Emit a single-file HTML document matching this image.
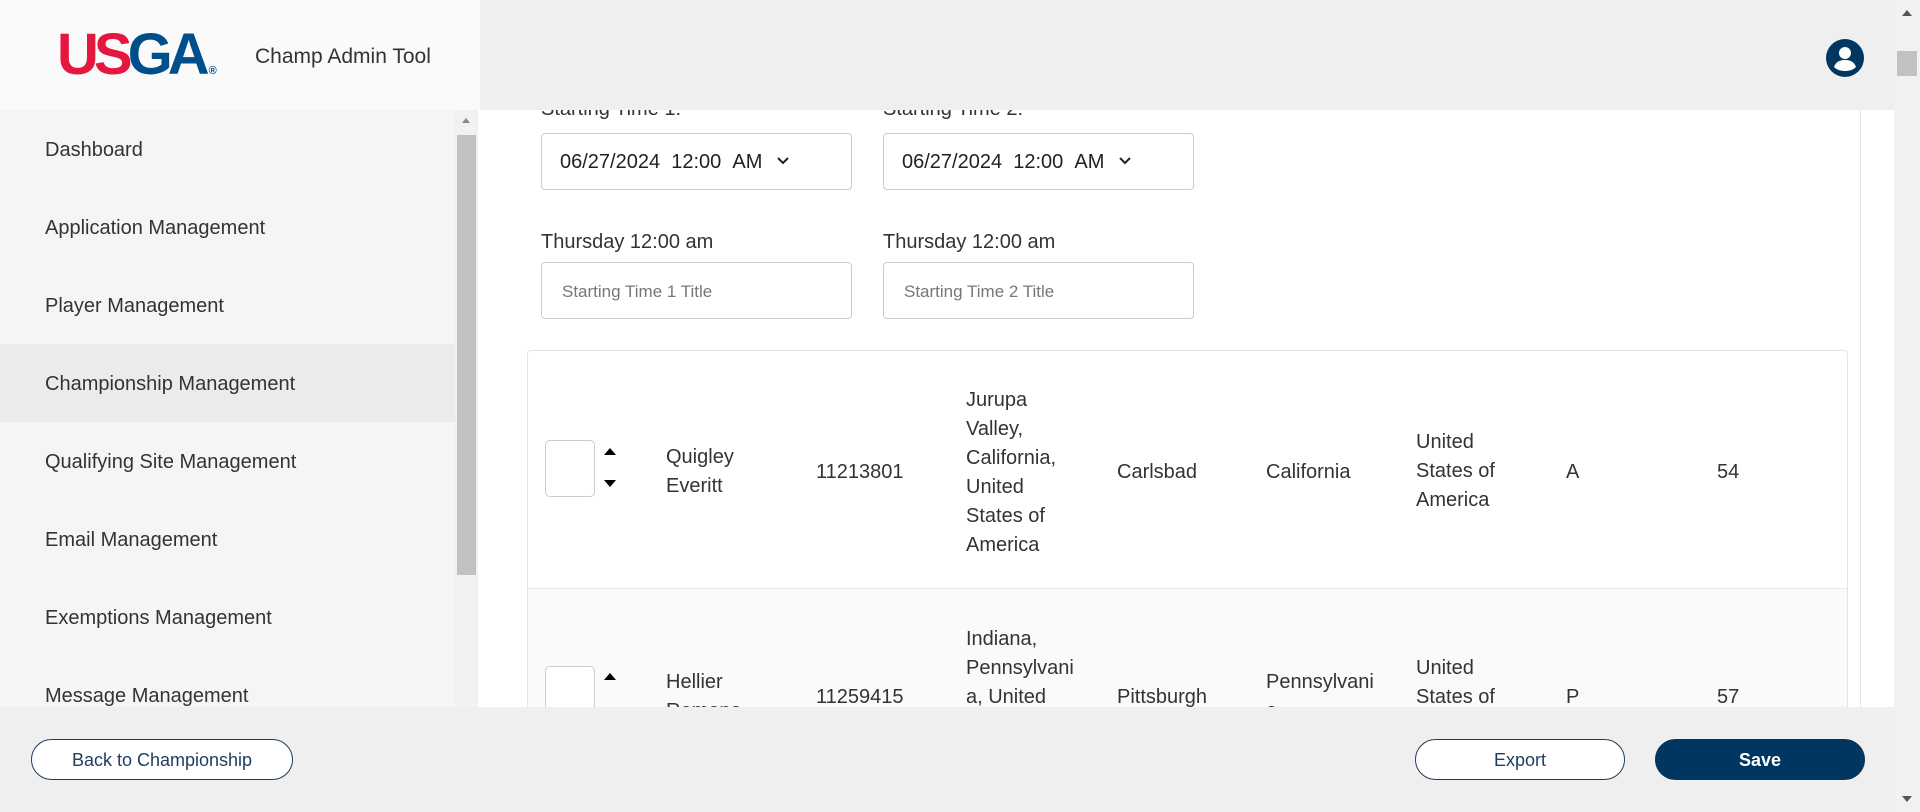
<!DOCTYPE html>
<html><head><meta charset="utf-8"><style>
*{box-sizing:border-box;margin:0;padding:0}
body{width:1920px;height:812px;overflow:hidden;background:#fff;font-family:"Liberation Sans",sans-serif;color:#333;position:relative}
.abs{position:absolute}
.hdrL{left:0;top:0;width:480px;height:110px;background:#fafafa}
.side{left:0;top:110px;width:455px;height:597px;background:#f5f5f5}
.item{position:absolute;left:0;width:455px;height:78px;padding-left:45px;line-height:80px;font-size:20px;color:#333}
.sb{left:455px;top:110px;width:23px;height:597px;background:#f1f1f1}
.foot{left:0;top:707px;width:1894px;height:105px;background:#efefef}
.btn{position:absolute;height:41px;border:1px solid #1d3c5e;border-radius:21px;text-align:center;line-height:40px;font-size:18px;color:#1d3c5e;background:#fff}
.rsb{left:1894px;top:0;width:26px;height:812px;background:#f1f1f1}
.inp{position:absolute;height:57px;border:1px solid #ccc;border-radius:4px;background:#fff;font-size:20px}
.lbl{position:absolute;font-size:20px;color:#333}
.cell{position:absolute;font-size:20px;line-height:29px;color:#333;top:2px}
</style></head><body>
<div class="lbl" style="left:541px;top:98px">Starting Time 1:</div>
<div class="lbl" style="left:883px;top:98px">Starting Time 2:</div>
<div class="abs" style="left:480px;top:0;width:1414px;height:110px;background:#efefef"></div>
<div class="abs hdrL"></div>
<div class="abs" style="left:57px;top:30px;font:bold 58px 'Liberation Sans',sans-serif;letter-spacing:-5px;line-height:50px"><span style="color:#e4173e">US</span><span style="color:#004f8b">GA</span><span style="font-size:11px;color:#004f8b;letter-spacing:0;margin-left:4px">®</span></div>
<div class="abs" style="left:255px;top:45px;font-size:21px;color:#333">Champ Admin Tool</div>
<svg class="abs" style="left:1825px;top:38px" width="40" height="40" viewBox="0 0 40 40"><circle cx="20" cy="20" r="19" fill="#00365f"/><circle cx="20" cy="15" r="6" fill="#fff"/><path d="M9 29c2-6 7-7 11-7s9 1 11 7c-3 3-7 4-11 4s-8-1-11-4z" fill="#fff"/></svg>

<div class="abs side">
<div class="item" style="top:0">Dashboard</div>
<div class="item" style="top:78px">Application Management</div>
<div class="item" style="top:156px">Player Management</div>
<div class="item" style="top:234px;background:#ebebeb">Championship Management</div>
<div class="item" style="top:312px">Qualifying Site Management</div>
<div class="item" style="top:390px">Email Management</div>
<div class="item" style="top:468px">Exemptions Management</div>
<div class="item" style="top:546px">Message Management</div>
</div>
<div class="abs sb"><div style="position:absolute;left:7px;top:8px;border:4px solid transparent;border-bottom:5px solid #888;border-top:0"></div><div style="position:absolute;left:2px;top:25px;width:19px;height:440px;background:#c1c1c1"></div></div>

<div class="inp" style="left:541px;top:133px;width:311px;line-height:57px;padding-left:18px;color:#222">06/27/2024&nbsp; 12:00 &nbsp;AM <svg width="14" height="10" viewBox="0 0 14 10" style="margin-left:8px;vertical-align:2px"><path d="M2 2l5 5 5-5" fill="none" stroke="#222" stroke-width="2"/></svg></div>
<div class="inp" style="left:883px;top:133px;width:311px;line-height:57px;padding-left:18px;color:#222">06/27/2024&nbsp; 12:00 &nbsp;AM <svg width="14" height="10" viewBox="0 0 14 10" style="margin-left:8px;vertical-align:2px"><path d="M2 2l5 5 5-5" fill="none" stroke="#222" stroke-width="2"/></svg></div>
<div class="lbl" style="left:541px;top:231px">Thursday 12:00 am</div>
<div class="lbl" style="left:883px;top:231px">Thursday 12:00 am</div>
<div class="inp" style="left:541px;top:262px;width:311px;line-height:57px;padding-left:20px;color:#777;font-size:17px">Starting Time 1 Title</div>
<div class="inp" style="left:883px;top:262px;width:311px;line-height:57px;padding-left:20px;color:#777;font-size:17px">Starting Time 2 Title</div>
<div class="abs" style="left:1860px;top:110px;width:1px;height:600px;background:#e4e4e4"></div>

<div class="abs" style="left:527px;top:350px;width:1321px;height:400px;border:1px solid #e4e4e4;border-radius:4px"></div>
<div class="abs" style="left:528px;top:588px;width:1319px;height:160px;background:#fafafa;border-top:1px solid #e8e8e8"></div>

<div style="position:absolute;left:0;top:2px;width:1920px;height:705px;overflow:hidden">
<div class="abs" style="left:545px;top:438px;width:50px;height:57px;border:1px solid #ccc;border-radius:5px;background:#fff"></div>
<div class="abs" style="left:604px;top:446px;border:6px solid transparent;border-bottom:7px solid #000;border-top:0"></div>
<div class="abs" style="left:604px;top:478px;border:6px solid transparent;border-top:7px solid #000;border-bottom:0"></div>
<div class="cell" style="left:666px;top:441px">Quigley<br>Everitt</div>
<div class="cell" style="left:816px;top:456px">11213801</div>
<div class="cell" style="left:966px;top:384px">Jurupa<br>Valley,<br>California,<br>United<br>States of<br>America</div>
<div class="cell" style="left:1117px;top:456px">Carlsbad</div>
<div class="cell" style="left:1266px;top:456px">California</div>
<div class="cell" style="left:1416px;top:426px">United<br>States of<br>America</div>
<div class="cell" style="left:1566px;top:456px">A</div>
<div class="cell" style="left:1717px;top:456px">54</div>

<div class="abs" style="left:545px;top:664px;width:50px;height:57px;border:1px solid #ccc;border-radius:5px;background:#fff"></div>
<div class="abs" style="left:604px;top:671px;border:6px solid transparent;border-bottom:7px solid #000;border-top:0"></div>
<div class="cell" style="left:666px;top:666px">Hellier<br>Romona</div>
<div class="cell" style="left:816px;top:681px">11259415</div>
<div class="cell" style="left:966px;top:623px">Indiana,<br>Pennsylvani<br>a, United</div>
<div class="cell" style="left:1117px;top:681px">Pittsburgh</div>
<div class="cell" style="left:1266px;top:666px">Pennsylvani<br>a</div>
<div class="cell" style="left:1416px;top:652px">United<br>States of</div>
<div class="cell" style="left:1566px;top:681px">P</div>
<div class="cell" style="left:1717px;top:681px">57</div>
</div>

<div class="abs foot">
<div class="btn" style="left:31px;top:32px;width:262px">Back to Championship</div>
<div class="btn" style="left:1415px;top:32px;width:210px">Export</div>
<div class="btn" style="left:1655px;top:32px;width:210px;background:#00365f;border-color:#00365f;color:#fff;font-weight:bold">Save</div>
</div>
<div class="abs rsb"><div style="position:absolute;left:8px;top:10px;border:5px solid transparent;border-bottom:6px solid #555;border-top:0"></div><div style="position:absolute;left:3px;top:51px;width:20px;height:25px;background:#c1c1c1"></div><div style="position:absolute;left:8px;top:796px;border:5px solid transparent;border-top:6px solid #555;border-bottom:0"></div></div>
</body></html>
